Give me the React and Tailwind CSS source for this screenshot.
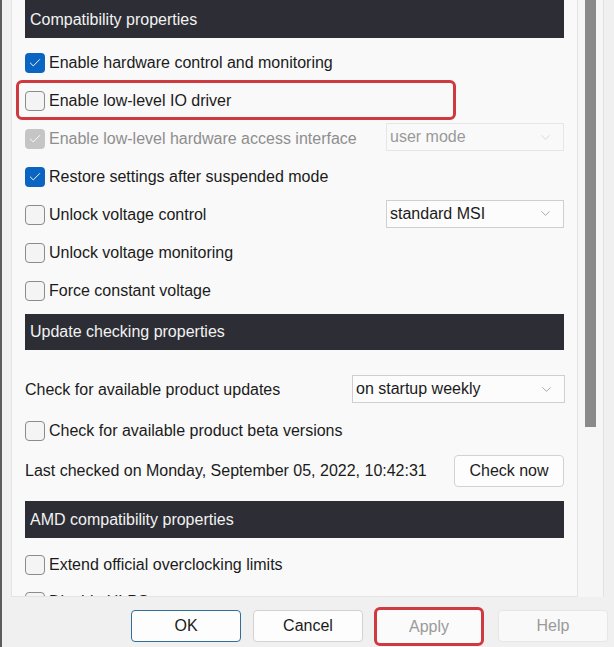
import { Check, ChevronDown } from "lucide-react";

// one tick box + label, the label greys out when disabled
function Box({ checked, disabled }) {
  if (checked) {
    return (
      <div
        className={`w-[20px] h-[20px] rounded-[4px] flex items-center justify-center shrink-0 ${
          disabled ? "bg-[#c5c5c5]" : "bg-[#0a64c2]"
        }`}
      >
        <Check size={14} strokeWidth={1.6} className="text-white" />
      </div>
    );
  }
  return <div className="w-[20px] h-[20px] rounded-[4px] border border-[#8b8b8b] bg-[#f4f4f4] shrink-0" />;
}

function Row({ label, checked, disabled, children, noBox, h = "h-[38px]" }) {
  return (
    <div className={`${h} flex items-center`}>
      {!noBox && <Box checked={checked} disabled={disabled} />}
      <span className={`${noBox ? "" : "ml-[4px]"} text-[16px] ${disabled ? "text-[#8e8e8e]" : "text-[#1b1b1b]"}`}>
        {label}
      </span>
      {children}
    </div>
  );
}

function Select({ value, disabled, className }) {
  return (
    <div
      className={`ml-auto h-[28px] flex items-center pl-[3px] pr-[10px] border text-[16px] ${
        disabled ? "border-[#e6e6e6] text-[#9a9a9a] bg-[#f9f9f9]" : "border-[#cfcfcf] text-[#1b1b1b] bg-[#fcfcfc]"
      } ${className}`}
    >
      <span>{value}</span>
      <ChevronDown size={15} strokeWidth={1} className={`ml-auto ${disabled ? "text-[#c4c4c4]" : "text-[#777]"}`} />
    </div>
  );
}

function Header({ title, className }) {
  return (
    <div className={`bg-[#2d2e35] text-[#f2f2f2] text-[16px] flex items-center pl-[5px] ${className}`}>{title}</div>
  );
}

function Btn({ label, className }) {
  return (
    <div className={`w-[110px] flex items-center justify-center rounded-[4px] text-[16px] ${className}`}>{label}</div>
  );
}

export default function App() {
  return (
    <div className="w-[614px] h-[647px] bg-[#f0f0f0] border-l-2 border-[#5c5c5c] flex flex-col font-['Liberation_Sans',Arial,sans-serif] overflow-hidden">
      <div className="h-[597px] flex pl-[9px]">
        {/* scrolled panel */}
        <div className="w-[567px] h-full bg-[#f9f9f9] border border-[#e4e4e4] border-t-0 overflow-hidden px-[13px]">
          <Header title="Compatibility properties" className="h-[38px] pt-[1px]" />
          <div className="mt-[6px]">
            <Row label="Enable hardware control and monitoring" checked />
            <div className="relative">
              <Row label="Enable low-level IO driver" />
              <div className="absolute -left-[9px] -top-[2px] w-[440px] h-[40px] border-[3px] border-[#cf3a40] rounded-[6px]" />
            </div>
            <Row label="Enable low-level hardware access interface" checked disabled>
              <Select value="user mode" disabled className="w-[178px] -mt-[4px]" />
            </Row>
            <Row label="Restore settings after suspended mode" checked />
            <Row label="Unlock voltage control">
              <Select value="standard MSI" className="w-[178px] -mt-[3px]" />
            </Row>
            <Row label="Unlock voltage monitoring" />
            <Row label="Force constant voltage" />
          </div>
          <Header title="Update checking properties" className="h-[36px] mt-[4px]" />
          <div className="mt-[21px]">
            <Row label="Check for available product updates" noBox>
              <Select value="on startup weekly" className="w-[213px] -mr-[1px] -mt-[2px]" />
            </Row>
            <div className="mt-[3px]">
              <Row label="Check for available product beta versions" />
            </div>
            <div className="mt-[2px]">
              <Row label="Last checked on Monday, September 05, 2022, 10:42:31" noBox>
                <Btn label="Check now" className="ml-auto h-[32px] border border-[#d2d2d2] bg-[#fdfdfd] text-[#1b1b1b]" />
              </Row>
            </div>
          </div>
          <Header title="AMD compatibility properties" className="h-[37px] mt-[11px]" />
          <div className="mt-[9px]">
            <Row label="Extend official overclocking limits" h="h-[36px]" />
            <Row label="Disable ULPS" />
          </div>
        </div>
        {/* scrollbar */}
        <div className="w-[26px] h-full bg-[#f6f6f6] border-r border-[#e2e2e2] pl-[7px]">
          <div className="w-[11px] h-[427px] bg-[#8a8a8a]" />
        </div>
      </div>
      {/* footer buttons */}
      <div className="flex items-start pl-[129px] pt-[10px] gap-[12px]">
        <Btn label="OK" className="h-[32px] mt-[3px] border border-[#2f6f9a] bg-[#fdfdfd] text-[#1b1b1b]" />
        <Btn label="Cancel" className="h-[32px] mt-[3px] border border-[#d2d2d2] bg-[#fdfdfd] text-[#1b1b1b]" />
        <Btn label="Apply" className="h-[39px] -ml-[1px] border-[3px] border-[#cf3a40] bg-[#fbfbfb] text-[#9a9a9a] rounded-[6px]" />
        <Btn label="Help" className="h-[32px] mt-[3px] ml-[2px] border border-[#e6e6e6] bg-[#f9f9f9] text-[#9a9a9a]" />
      </div>
    </div>
  );
}
